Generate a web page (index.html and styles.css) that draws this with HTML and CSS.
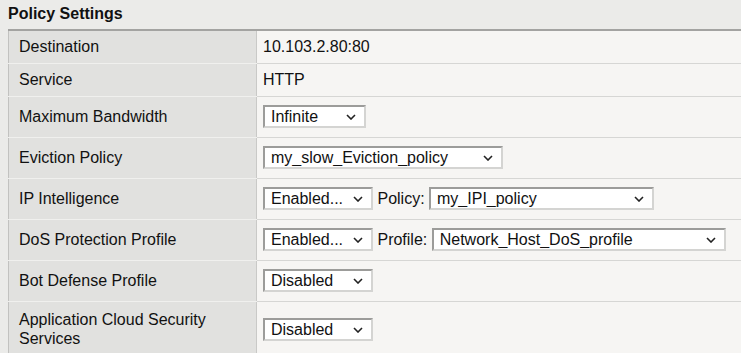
FILE: index.html
```html
<!DOCTYPE html>
<html lang="en">
<head>
    <meta charset="UTF-8">
    <meta name="viewport" content="width=device-width, initial-scale=1.0">
    <title>Policy Settings</title>
    <link rel="stylesheet" href="styles.css">
</head>
<body>
    <!-- Policy Settings panel -->
    <div class="panel">
        <h2 class="panel-title">Policy Settings</h2>

        <table class="settings">
            <tr class="row-text">
                <th>Destination</th>
                <td>10.103.2.80:80</td>
            </tr>
            <tr class="row-text">
                <th>Service</th>
                <td>HTTP</td>
            </tr>
            <tr>
                <th>Maximum Bandwidth</th>
                <td>
                    <span class="select-wrap">
                        <select class="select w-xs"><option>Infinite</option></select>
                        <svg class="chevron" width="10" height="6" viewBox="0 0 10 6"><polyline points="1,1 5,5 9,1" /></svg>
                    </span>
                </td>
            </tr>
            <tr>
                <th>Eviction Policy</th>
                <td>
                    <span class="select-wrap">
                        <select class="select w-md"><option>my_slow_Eviction_policy</option></select>
                        <svg class="chevron" width="10" height="6" viewBox="0 0 10 6"><polyline points="1,1 5,5 9,1" /></svg>
                    </span>
                </td>
            </tr>
            <tr>
                <th>IP Intelligence</th>
                <td>
                    <span class="select-wrap">
                        <select class="select w-sm"><option>Enabled...</option></select>
                        <svg class="chevron" width="10" height="6" viewBox="0 0 10 6"><polyline points="1,1 5,5 9,1" /></svg>
                    </span>
                    <span class="inline-label">Policy:</span>
                    <span class="select-wrap">
                        <select class="select w-lg"><option>my_IPI_policy</option></select>
                        <svg class="chevron" width="10" height="6" viewBox="0 0 10 6"><polyline points="1,1 5,5 9,1" /></svg>
                    </span>
                </td>
            </tr>
            <tr>
                <th>DoS Protection Profile</th>
                <td>
                    <span class="select-wrap">
                        <select class="select w-sm"><option>Enabled...</option></select>
                        <svg class="chevron" width="10" height="6" viewBox="0 0 10 6"><polyline points="1,1 5,5 9,1" /></svg>
                    </span>
                    <span class="inline-label">Profile:</span>
                    <span class="select-wrap">
                        <select class="select w-xl"><option>Network_Host_DoS_profile</option></select>
                        <svg class="chevron" width="10" height="6" viewBox="0 0 10 6"><polyline points="1,1 5,5 9,1" /></svg>
                    </span>
                </td>
            </tr>
            <tr>
                <th>Bot Defense Profile</th>
                <td>
                    <span class="select-wrap">
                        <select class="select w-sm"><option>Disabled</option></select>
                        <svg class="chevron" width="10" height="6" viewBox="0 0 10 6"><polyline points="1,1 5,5 9,1" /></svg>
                    </span>
                </td>
            </tr>
            <tr class="row-tall">
                <th>Application Cloud Security Services</th>
                <td>
                    <span class="select-wrap">
                        <select class="select w-sm"><option>Disabled</option></select>
                        <svg class="chevron" width="10" height="6" viewBox="0 0 10 6"><polyline points="1,1 5,5 9,1" /></svg>
                    </span>
                </td>
            </tr>
        </table>
    </div>
</body>
</html>
```

FILE: styles.css
```css
/* 基础样式 */
* {
    margin: 0;
    padding: 0;
    box-sizing: border-box;
}

html, body {
    background-color: #ebebe9;
    color: #111;
    font-family: 'Liberation Sans', Arial, sans-serif;
    font-size: 16px;
    overflow: hidden;
}

/* 面板标题 */
.panel-title {
    height: 29px;
    padding: 5px 8px 0;
    font-size: 16px;
    font-weight: bold;
    line-height: 18px;
}

/* 设置表格 */
.settings {
    margin-left: 8px;
    width: 760px;
    border-collapse: collapse;
    border-top: 2px solid #a3a3a1;
    border-left: 1px solid #c2c2c0;
}

.settings tr {
    height: 41px;
}

.settings tr.row-text {
    height: 33px;
}

.settings tr.row-tall {
    height: 56px;
}

.settings th,
.settings td {
    border-bottom: 1px solid #d6d6d4;
    vertical-align: middle;
    text-align: left;
    font-weight: normal;
    line-height: 19px;
}

.settings th {
    width: 248px;
    padding: 0 20px 0 10px;
    background-color: #e1e1df;
    border-right: 1px solid #c9c9c7;
    border-bottom-color: #f0f0ee;
}

.settings td {
    padding: 0 6px;
    background-color: #f6f5f3;
}

/* 下拉框 */
.select-wrap {
    display: inline-block;
    position: relative;
    vertical-align: middle;
}

.select {
    display: block;
    height: 23px;
    padding: 0 24px 0 6px;
    font-family: 'Liberation Sans', Arial, sans-serif;
    font-size: 16px;
    color: #111;
    background-color: #fff;
    border: 2px solid;
    border-color: #9c9c9a #d4d4d2 #d4d4d2 #9c9c9a;
    border-radius: 0;
    -webkit-appearance: none;
    appearance: none;
}

.chevron {
    position: absolute;
    right: 10px;
    top: 9px;
    fill: none;
    stroke: #222;
    stroke-width: 1.6;
}

.w-xs { width: 103px; }
.w-sm { width: 110px; }
.w-md { width: 240px; }
.w-lg { width: 225px; }
.w-xl { width: 294px; }

.inline-label {
    display: inline-block;
    vertical-align: middle;
}
```
